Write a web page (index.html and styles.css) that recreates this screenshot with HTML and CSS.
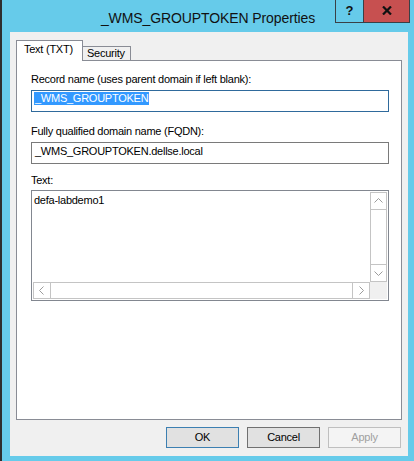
FILE: index.html
```html
<!DOCTYPE html>
<html>
<head>
<meta charset="utf-8">
<link rel="stylesheet" href="styles.css">
</head>
<body>
<div class="window">
  <div class="titlebar">
    <div class="title">_WMS_GROUPTOKEN Properties</div>
    <div class="caption-btns">
      <div class="cbtn help">?</div>
      <div class="cbtn close">
        <svg width="10" height="9" viewBox="0 0 10 9"><path d="M1 0.5 L9 8.5 M9 0.5 L1 8.5" stroke="#111" stroke-width="2.2" fill="none"/></svg>
      </div>
    </div>
  </div>
  <div class="client">
    <div class="tabs">
      <div class="tab active">Text (TXT)</div>
      <div class="tab">Security</div>
    </div>
    <div class="panel">
      <div class="lbl l1">Record name (uses parent domain if left blank):</div>
      <div class="field focused"><span class="sel">_WMS_GROUPTOKEN</span></div>
      <div class="lbl l2">Fully qualified domain name (FQDN):</div>
      <div class="field">_WMS_GROUPTOKEN.dellse.local</div>
      <div class="lbl l3">Text:</div>
      <div class="memo">
        <div class="memo-text">defa-labdemo1</div>
        <div class="vscroll">
          <div class="arrow up"><svg width="15" height="16" viewBox="0 0 15 16"><path d="M3.5 9.5 L7.5 5.5 L11.5 9.5" stroke="#9c9c9c" stroke-width="1" fill="none"/></svg></div>
          <div class="track"></div>
          <div class="arrow down"><svg width="15" height="16" viewBox="0 0 15 16"><path d="M3.5 6.5 L7.5 10.5 L11.5 6.5" stroke="#9c9c9c" stroke-width="1" fill="none"/></svg></div>
        </div>
        <div class="hscroll">
          <div class="arrow left"><svg width="16" height="15" viewBox="0 0 16 15"><path d="M9.5 3.5 L5.5 7.5 L9.5 11.5" stroke="#9c9c9c" stroke-width="1" fill="none"/></svg></div>
          <div class="track"></div>
          <div class="arrow right"><svg width="16" height="15" viewBox="0 0 16 15"><path d="M6.5 3.5 L10.5 7.5 L6.5 11.5" stroke="#9c9c9c" stroke-width="1" fill="none"/></svg></div>
        </div>
        <div class="corner"></div>
      </div>
    </div>
    <div class="buttons">
      <div class="btn default">OK</div>
      <div class="btn">Cancel</div>
      <div class="btn disabled">Apply</div>
    </div>
  </div>
</div>
</body>
</html>
```

FILE: styles.css
```css
html, body {
  margin: 0;
  padding: 0;
}
body {
  background: #2e2e2e;
  width: 414px;
  height: 461px;
  overflow: hidden;
  font-family: "Liberation Sans", Arial, sans-serif;
  font-size: 11px;
  letter-spacing: -0.25px;
  color: #000;
}
.window {
  margin-left: 2px;
  width: 412px;
  height: 461px;
  box-sizing: border-box;
  background: #66cbea;
  padding: 0 6px 5px 8px;
  display: flex;
  flex-direction: column;
}
.titlebar {
  position: relative;
  height: 32px;
  flex: 0 0 32px;
  margin: 0 -6px 0 -8px;
}
.title {
  text-align: center;
  padding-top: 10px;
  font-size: 14px;
  line-height: 16px;
  letter-spacing: -0.1px;
  color: #111;
}
.caption-btns {
  position: absolute;
  top: 0;
  right: 4px;
  display: flex;
}
.cbtn {
  height: 22px;
  border: 1px solid #3a4046;
  border-top: none;
  display: flex;
  align-items: center;
  justify-content: center;
  box-sizing: content-box;
}
.help {
  width: 27px;
  margin-right: -1px;
  font-weight: bold;
  font-size: 13px;
  letter-spacing: 0;
  padding-bottom: 2px;
  height: 20px;
  color: #111;
}
.close {
  width: 45px;
  background: #c75050;
  padding-bottom: 1px;
  height: 21px;
}
.client {
  flex: 1;
  background: #f0f0f0;
  padding: 8px 6px 8px 6px;
  display: flex;
  flex-direction: column;
}
.tabs {
  display: flex;
  align-items: flex-end;
  height: 20px;
  flex: 0 0 20px;
}
.tab {
  border: 1px solid #898c95;
  border-bottom: none;
  box-sizing: border-box;
  line-height: 13px;
}
.tab.active {
  position: relative;
  z-index: 1;
  width: 67px;
  height: 21px;
  margin-bottom: -1px;
  background: #fff;
  padding: 2px 0 0 7px;
}
.tab:not(.active) {
  width: 49px;
  height: 14px;
  margin-left: -1px;
  background: #f0f0f0;
  padding: 0 0 0 4px;
}
.panel {
  height: 360px;
  flex: 0 0 360px;
  box-sizing: border-box;
  border: 1px solid #898c95;
  background: #fff;
  padding: 12px 12px 0 14px;
  display: flex;
  flex-direction: column;
}
.lbl {
  line-height: 13px;
  height: 13px;
}
.l2 { margin-top: 13px; }
.l3 { margin-top: 10px; }
.field {
  margin-top: 4px;
  height: 22px;
  box-sizing: border-box;
  border: 1px solid #7a7a7a;
  padding: 2px 3px;
  line-height: 13px;
  white-space: nowrap;
}
.field.focused {
  border-color: #2f6a9c;
  padding-top: 1px;
  padding-left: 2px;
}
.sel {
  display: inline-block;
  background: #3399ff;
  color: #fff;
  padding: 0 1px 0 1px;
}
.memo {
  margin-top: 3px;
  height: 111px;
  box-sizing: border-box;
  border: 1px solid #828790;
  padding: 1px;
  display: grid;
  grid-template-columns: 1fr 17px;
  grid-template-rows: 90px 17px;
}
.memo-text {
  padding: 2px 0 0 1px;
  line-height: 13px;
}
.vscroll {
  border: 1px solid #c4c4c4;
  display: flex;
  flex-direction: column;
  background: #fff;
}
.vscroll .arrow {
  height: 16px;
  flex: 0 0 16px;
  display: flex;
}
.vscroll .up { border-bottom: 1px solid #c4c4c4; }
.vscroll .down { border-top: 1px solid #c4c4c4; }
.track { flex: 1; }
.hscroll {
  border: 1px solid #c4c4c4;
  display: flex;
  background: #fff;
}
.hscroll .arrow {
  width: 16px;
  flex: 0 0 16px;
  display: flex;
}
.hscroll .left { border-right: 1px solid #c4c4c4; }
.hscroll .right { border-left: 1px solid #c4c4c4; }
.corner {
  background: #f0f0f0;
}
.buttons {
  margin-top: 7px;
  display: flex;
  justify-content: flex-end;
  gap: 8px;
  padding-right: 1px;
}
.btn {
  width: 73px;
  height: 21px;
  box-sizing: border-box;
  border: 1px solid #707070;
  background: #e1e1e1;
  display: flex;
  align-items: center;
  justify-content: center;
  line-height: 13px;
}
.btn.default {
  border-color: #3c7fb1;
}
.btn.disabled {
  border-color: #bfbfbf;
  background: #f4f4f4;
  color: #a0a0a0;
}
```
